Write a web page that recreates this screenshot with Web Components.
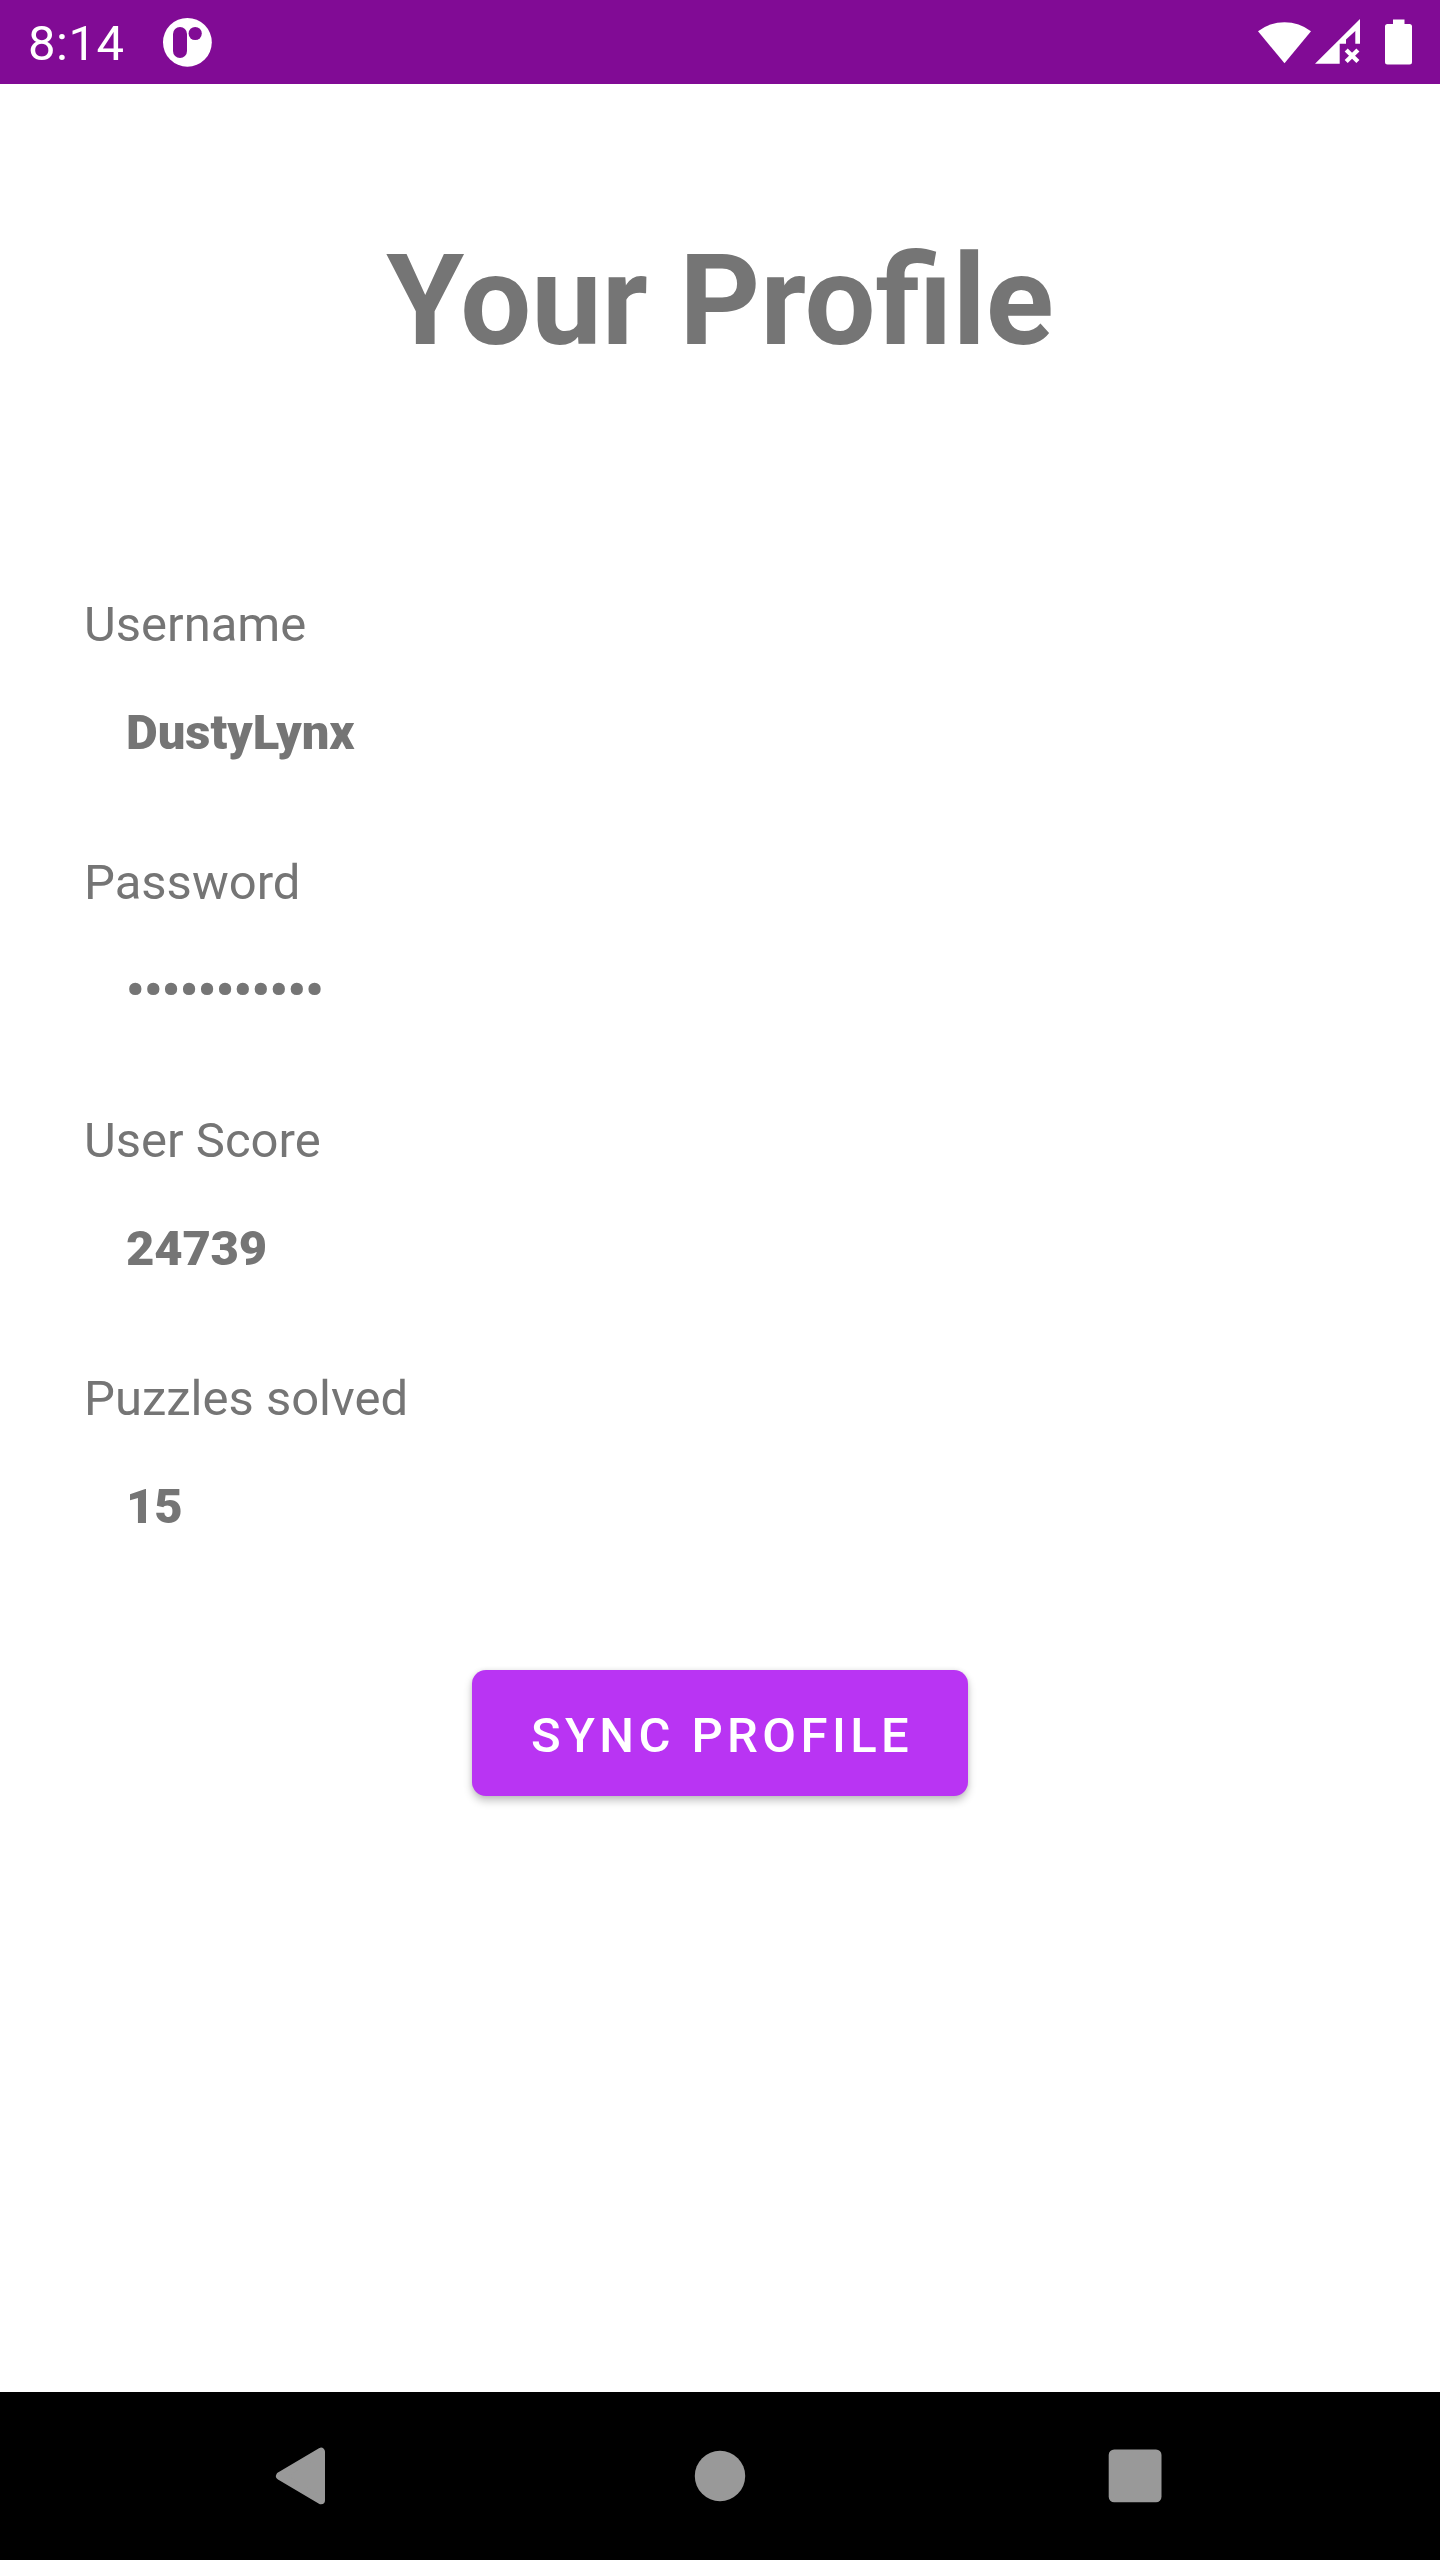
<!DOCTYPE html>
<html lang="en">
<head>
<meta charset="utf-8">
<title>Your Profile</title>
<style>
html, body { margin: 0; padding: 0; background: #fff; }
body { width: 1440px; height: 2560px; overflow: hidden; font-family: Roboto, "Liberation Sans", sans-serif; }
</style>
</head>
<body>
<profile-screen></profile-screen>
<script>
const define = (name, html) => customElements.define(name, class extends HTMLElement {
  constructor() {
    super();
    this.attachShadow({ mode: "open" }).innerHTML = html;
  }
});

define("status-bar", `
<style>
:host { display: flex; box-sizing: border-box; height: 84px; background: #810b95; color: #fff; align-items: center; justify-content: space-between; }
.left { display: flex; align-items: center; height: 84px; padding-left: 28px; gap: 38.5px; }
time { font-size: 49px; line-height: 58px; padding-top: 4px; letter-spacing: .5px; }
svg { display: block; }
</style>
<div class="left">
  <time>8:14</time>
  <svg width="50" height="84" viewBox="163 0 50 84">
    <circle cx="187.4" cy="42.3" r="24.4" fill="#fff"/>
    <rect x="173" y="27" width="14" height="31" rx="7" fill="#810b95"/>
    <circle cx="195.2" cy="33.5" r="6.6" fill="#810b95"/>
  </svg>
</div>
<svg width="190" height="84" viewBox="1250 0 190 84" fill="#fff">
  <path d="M1258 31.300A43 43 0 0 1 1311 31.300L1284.500 63.300Z"/>
  <path d="M1315 63.700L1360 19V43.700H1355.300V31L1346 39.500V43.700H1339.700V63.700Z"/>
  <path d="M1346.200 49.900L1357.900 61.600M1357.900 49.900L1346.200 61.600" fill="none" stroke="#fff" stroke-width="4.300"/>
  <path d="M1393 19.500H1404.500V24H1409.500Q1412 24 1412 26.500V62Q1412 64.500 1409.500 64.500H1387.500Q1385 64.500 1385 62V26.500Q1385 24 1387.500 24H1393Z"/>
</svg>`);

define("profile-field", `
<style>
:host { display: flex; flex-direction: column; height: 258px; font-size: 49px; line-height: 58px; color: #757575; }
.value { font-weight: 900; padding: 50px 0 0 42px; }
:host([tight]) .value { letter-spacing: -.2px; }
</style>
<div class="label"><slot name="label"></slot></div>
<div class="value"><slot></slot></div>`);

define("action-button", `
<style>
:host { display: block; }
button { display: block; width: 496px; height: 126px; padding: 6px 0 0 4px; border: 0; border-radius: 14px; background: #b934f3; color: #fff; font: 500 49px/58px Roboto, "Liberation Sans", sans-serif; letter-spacing: 4.4px; white-space: nowrap; box-shadow: 0 5px 9px rgba(0,0,0,.23), 0 0 5px rgba(0,0,0,.09); }
</style>
<button><slot></slot></button>`);

define("nav-bar", `
<style>
:host { display: flex; height: 168px; background: #000; align-items: center; justify-content: center; }
svg { display: block; }
</style>
<svg width="1440" height="168" viewBox="0 2392 1440 168" fill="#999">
  <path d="M280 2476L321 2451.800V2500.200Z" stroke="#999" stroke-width="8" stroke-linejoin="round"/>
  <circle cx="720" cy="2476" r="25.200"/>
  <rect x="1108.700" y="2449.500" width="52.800" height="52.800" rx="5.500"/>
</svg>`);

define("profile-screen", `
<style>
:host { display: flex; flex-direction: column; height: 2560px; background: #fff; }
main { flex: 1; display: flex; flex-direction: column; }
h1 { margin: 0; padding-top: 143px; font-size: 125.900px; line-height: 148px; font-weight: 700; color: #757575; text-align: center; }
.fields { display: flex; flex-direction: column; padding: 221px 84px 0; }
action-button { align-self: center; padding-top: 42px; }
</style>
<status-bar></status-bar>
<main>
  <h1>Your Profile</h1>
  <div class="fields">
    <profile-field><span slot="label">Username</span>DustyLynx</profile-field>
    <profile-field tight><span slot="label">Password</span>•••••••••••</profile-field>
    <profile-field tight><span slot="label">User Score</span>24739</profile-field>
    <profile-field tight><span slot="label">Puzzles solved</span>15</profile-field>
  </div>
  <action-button>SYNC PROFILE</action-button>
</main>
<nav-bar></nav-bar>`);
</script>
</body>
</html>
